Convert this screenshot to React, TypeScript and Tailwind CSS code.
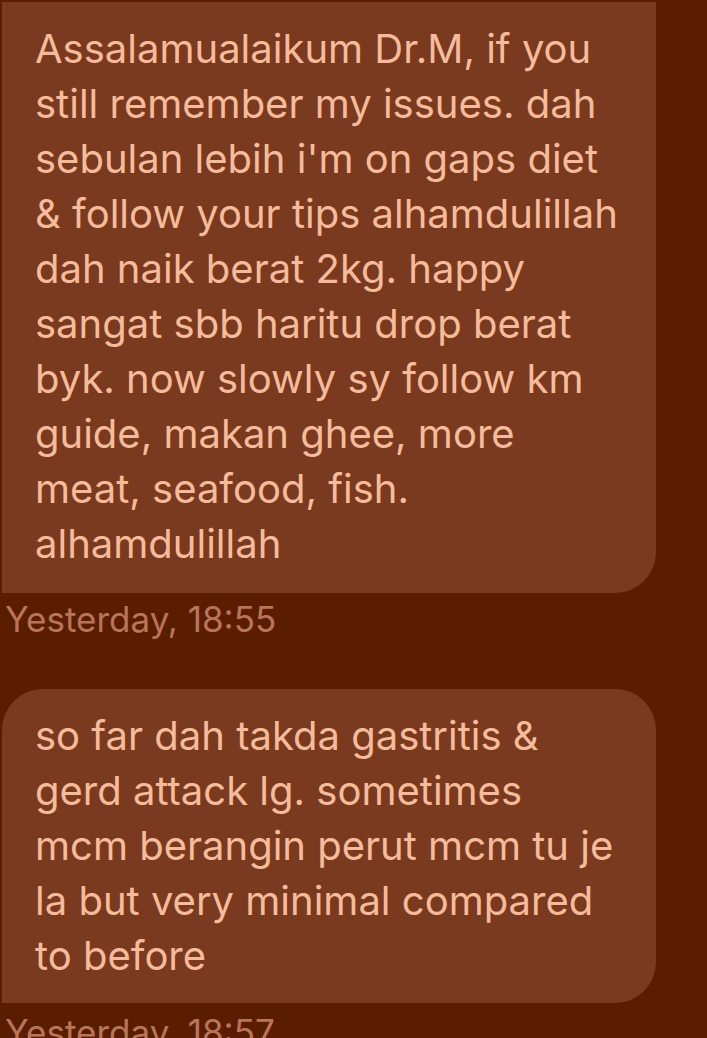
const first = [
	"Assalamualaikum Dr.M, if you",
	"still remember my issues. dah",
	"sebulan lebih i'm on gaps diet",
	"& follow your tips alhamdulillah",
	"dah naik berat 2kg. happy",
	"sangat sbb haritu drop berat",
	"byk. now slowly sy follow km",
	"guide, makan ghee, more",
	"meat, seafood, fish.",
	"alhamdulillah",
];

const second = [
	"so far dah takda gastritis &",
	"gerd attack lg. sometimes",
	"mcm berangin perut mcm tu je",
	"la but very minimal compared",
	"to before",
];

const Lines = ({ lines }: { lines: string[] }) => (
	<div className="text-[40px] leading-[55px] text-[#f6bb9a]">
		{lines.map((line) => (
			<div key={line} className="whitespace-nowrap">
				{line}
			</div>
		))}
	</div>
);

const App = () => {
	return (
		<div
			className="h-[1038px] w-[707px] overflow-hidden bg-[#5b1d00] pl-[2px] pt-[2px]"
			style={{ fontFamily: "Inter, 'Noto Sans', sans-serif" }}
		>
			<div className="h-[591px] w-[654px] rounded-br-[41px] bg-[#7a3a1f] pl-[33px] pt-[19px]">
				<Lines lines={first} />
			</div>
			<div className="pl-[3px] pt-[6px] text-[35px] leading-[40px] text-[#b97558]">
				Yesterday, 18:55
			</div>
			<div className="mt-[50px] h-[314px] w-[654px] rounded-t-[41px] rounded-br-[41px] bg-[#7a3a1f] pl-[33px] pt-[19px]">
				<Lines lines={second} />
			</div>
			<div className="pl-[3px] pt-[9px] text-[35px] leading-[40px] text-[#b97558]">
				Yesterday, 18:57
			</div>
		</div>
	);
};

export default App;
